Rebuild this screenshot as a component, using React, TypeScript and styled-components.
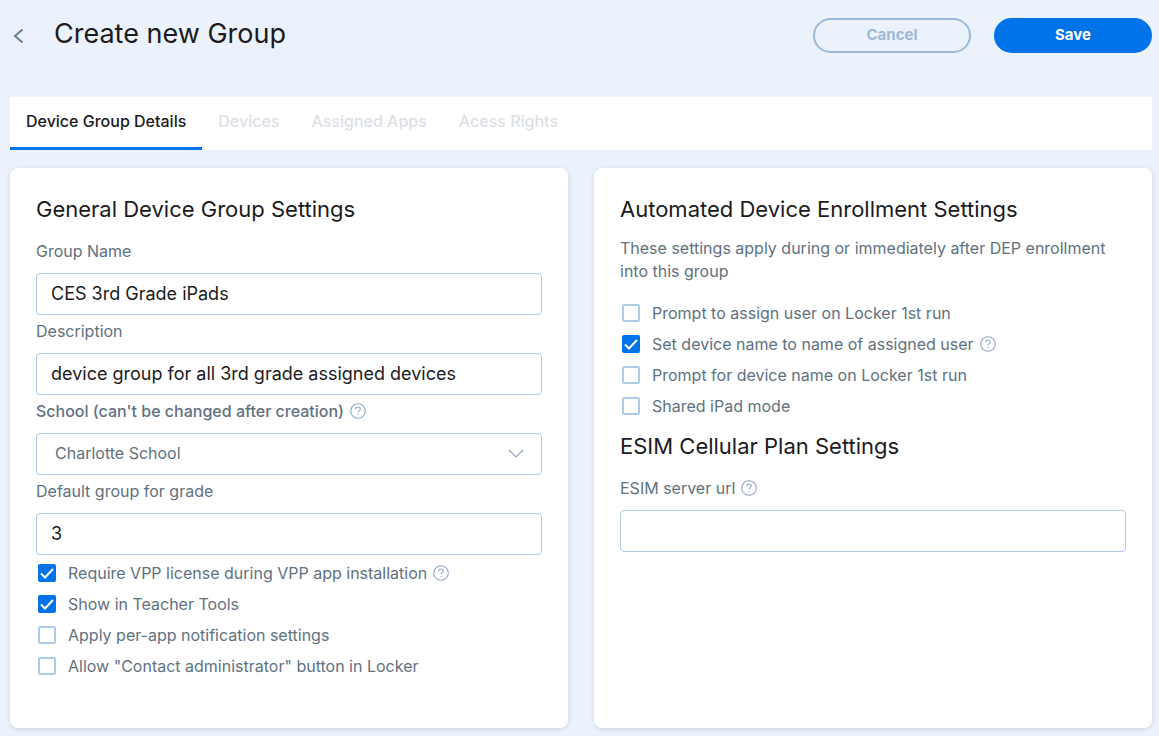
import React, { useState } from "react";
import styled, { createGlobalStyle } from "styled-components";

const color = {
  page: "#ebf2fb",
  primary: "#0073e9",
  ink: "#1b1b20",
  text: "#61717e",
  muted: "#9db9d8",
  disabled: "#dce0e6",
  line: "#aecbeb",
  icon: "#93a5c4",
};

const GlobalStyle = createGlobalStyle`
  *, *::before, *::after { box-sizing: border-box; }
  body {
    margin: 0;
    background: ${color.page};
    color: ${color.text};
    font-family: Inter, "Open Sans", sans-serif;
    font-size: 16px;
  }
  h1, h2, p { margin: 0; font-weight: 400; }
  button, input, select { font-family: inherit; }
`;

const Page = styled.div`
  display: flex;
  flex-direction: column;
  min-height: 100vh;
  padding: 18px 7px 8px 10px;
`;

const Header = styled.header`
  display: flex;
  align-items: flex-start;
  gap: 23px;
  height: 79px;
`;

const BackButton = styled.button`
  display: flex;
  align-items: center;
  width: 21px;
  height: 35px;
  padding: 0;
  border: 0;
  background: none;
  color: #6b7d8e;
`;

const Title = styled.h1`
  flex: 1;
  color: ${color.ink};
  font-size: 27px;
  line-height: 32px;
`;

const ActionButton = styled.button<{ $primary?: boolean }>`
  width: 158px;
  height: 35px;
  padding: 0 0 2px;
  border: 2px solid ${(p) => (p.$primary ? color.primary : color.muted)};
  border-radius: 18px;
  background: ${(p) => (p.$primary ? color.primary : "transparent")};
  color: ${(p) => (p.$primary ? "#fff" : color.muted)};
  font-size: 15px;
  font-weight: 700;
`;

const Tabs = styled.nav`
  display: flex;
  height: 53px;
  background: #fff;
`;

const Tab = styled.button<{ $active?: boolean }>`
  padding: 0 16px 2px;
  border: 0;
  border-bottom: 3px solid ${(p) => (p.$active ? color.primary : "transparent")};
  background: none;
  color: ${(p) => (p.$active ? color.ink : color.disabled)};
  font-size: 16px;
  font-weight: 500;
`;

const Cards = styled.main`
  display: grid;
  flex: 1;
  grid-template-columns: repeat(2, minmax(0, 1fr));
  gap: 26px;
  margin-top: 18px;
`;

const Card = styled.section`
  padding: 25px 26px;
  border-radius: 8px;
  background: #fff;
  box-shadow: 0 1px 4px rgba(90, 120, 160, 0.25);
`;

const CardTitle = styled.h2`
  color: ${color.ink};
  font-size: 22px;
  line-height: 32px;
`;

const Intro = styled.p`
  padding: 12px 0;
  line-height: 23px;
`;

const Field = styled.div<{ $first?: boolean }>`
  padding-top: ${(p) => (p.$first ? "10px" : "0")};
`;

const LabelRow = styled.div`
  display: flex;
  align-items: center;
  gap: 6px;
  height: 38px;
  padding-bottom: 7px;
`;

const Label = styled.label<{ $strong?: boolean }>`
  font-weight: ${(p) => (p.$strong ? 500 : 400)};
`;

const TextInput = styled.input`
  display: block;
  width: 100%;
  height: 42px;
  padding: 0 14px 2px;
  border: 1px solid ${color.line};
  border-radius: 4px;
  background: #fff;
  color: ${color.ink};
  font-size: 18px;
`;

const SelectBox = styled.div`
  display: grid;
  align-items: center;
  > * { grid-area: 1 / 1; }
  > svg { justify-self: end; margin-right: 18px; pointer-events: none; }
`;

const Select = styled.select`
  width: 100%;
  height: 42px;
  padding: 0 40px 2px 18px;
  border: 1px solid ${color.line};
  border-radius: 4px;
  appearance: none;
  background: #fff;
  color: ${color.text};
  font-size: 16px;
`;

const CheckList = styled.div`
  display: grid;
  gap: 7px;
  padding: 6px 0 0 2px;
`;

const CheckRow = styled.div`
  display: flex;
  align-items: center;
  height: 24px;
  label { display: flex; align-items: center; gap: 12px; }
  > svg { margin-left: 6px; }
`;

const CheckBox = styled.span`
  display: grid;
  place-items: center;
  > * { grid-area: 1 / 1; }
  > svg { pointer-events: none; }
`;

const CheckInput = styled.input`
  width: 18px;
  height: 18px;
  margin: 0;
  border: 2px solid ${color.line};
  border-radius: 2px;
  appearance: none;
  background: #fff;
  &:checked { border-color: ${color.primary}; background: ${color.primary}; }
`;

const Subsection = styled.div`
  padding-top: 12px;
`;

function HelpIcon() {
  return (
    <svg width="16" height="16" viewBox="0 0 16 16" fill="none" stroke={color.icon} role="img" aria-label="Help">
      <circle cx="8" cy="8" r="7.3" strokeWidth="1.1" />
      <path d="M5.7 6.2C5.7 4.8 6.7 4 8 4s2.3.8 2.3 2c0 1.7-2.2 1.7-2.2 3.5" strokeWidth="1.1" />
      <path d="M7.5 11.5h1.2" strokeWidth="1.2" />
    </svg>
  );
}

function Check({ id, text, checked = false, help }: { id: string; text: string; checked?: boolean; help?: boolean }) {
  const [on, setOn] = useState(checked);
  return (
    <CheckRow>
      <label htmlFor={id}>
        <CheckBox>
          <CheckInput id={id} type="checkbox" checked={on} onChange={() => setOn(!on)} />
          {on && (
            <svg width="18" height="18" viewBox="0 0 18 18" fill="none" stroke="#fff" strokeWidth="2">
              <path d="M3 9.5l4 4L15 5" />
            </svg>
          )}
        </CheckBox>
        {text}
      </label>
      {help && <HelpIcon />}
    </CheckRow>
  );
}

function TextField(props: { id: string; label: string; value?: string; first?: boolean; help?: boolean }) {
  return (
    <Field $first={props.first}>
      <LabelRow>
        <Label htmlFor={props.id}>{props.label}</Label>
        {props.help && <HelpIcon />}
      </LabelRow>
      <TextInput id={props.id} type="text" defaultValue={props.value} />
    </Field>
  );
}

export default function App() {
  return (
    <>
      <GlobalStyle />
      <Page>
        <Header>
          <BackButton type="button" aria-label="Back">
            <svg width="16" height="16" viewBox="0 0 16 16" fill="none" stroke="currentColor" strokeWidth="2">
              <path d="M12.5 1.5L5 8l7.5 6.5" />
            </svg>
          </BackButton>
          <Title>Create new Group</Title>
          <ActionButton type="button">Cancel</ActionButton>
          <ActionButton type="button" $primary>Save</ActionButton>
        </Header>
        <Tabs>
          <Tab type="button" $active>Device Group Details</Tab>
          <Tab type="button" disabled>Devices</Tab>
          <Tab type="button" disabled>Assigned Apps</Tab>
          <Tab type="button" disabled>Acess Rights</Tab>
        </Tabs>
        <Cards>
          <Card>
            <CardTitle>General Device Group Settings</CardTitle>
            <TextField id="name" label="Group Name" value="CES 3rd Grade iPads" first />
            <TextField id="description" label="Description" value="device group for all 3rd grade assigned devices" />
            <Field>
              <LabelRow>
                <Label htmlFor="school" $strong>School (can't be changed after creation)</Label>
                <HelpIcon />
              </LabelRow>
              <SelectBox>
                <Select id="school">
                  <option>Charlotte School</option>
                </Select>
                <svg width="16" height="10" viewBox="0 0 16 10" fill="none" stroke={color.icon} strokeWidth="1.2">
                  <path d="M1 1l7 7 7-7" />
                </svg>
              </SelectBox>
            </Field>
            <TextField id="grade" label="Default group for grade" value="3" />
            <CheckList>
              <Check id="vpp" text="Require VPP license during VPP app installation" checked help />
              <Check id="tools" text="Show in Teacher Tools" checked />
              <Check id="notify" text="Apply per-app notification settings" />
              <Check id="contact" text={'Allow "Contact administrator" button in Locker'} />
            </CheckList>
          </Card>
          <Card>
            <CardTitle>Automated Device Enrollment Settings</CardTitle>
            <Intro>These settings apply during or immediately after DEP enrollment into this group</Intro>
            <CheckList>
              <Check id="assign" text="Prompt to assign user on Locker 1st run" />
              <Check id="set-name" text="Set device name to name of assigned user" checked help />
              <Check id="prompt-name" text="Prompt for device name on Locker 1st run" />
              <Check id="shared" text="Shared iPad mode" />
            </CheckList>
            <Subsection>
              <CardTitle>ESIM Cellular Plan Settings</CardTitle>
              <TextField id="esim" label="ESIM server url" first help />
            </Subsection>
          </Card>
        </Cards>
      </Page>
    </>
  );
}
